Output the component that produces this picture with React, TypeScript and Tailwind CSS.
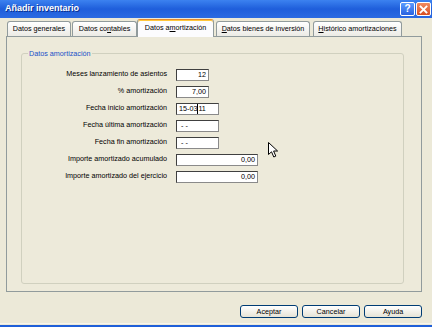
import React from "react";

type Row = {
  label: string;
  width: string;
  value: React.ReactNode;
  align: string;
};

const rows: Row[] = [
  { label: "Meses lanzamiento de asientos", width: "w-[33px]", value: "12", align: "justify-end pr-[2px]" },
  { label: "% amortización", width: "w-[33px]", value: "7,00", align: "justify-end pr-[2px]" },
  {
    label: "Fecha inicio amortización",
    width: "w-[43px]",
    value: (
      <>
        15-03
        <span className="inline-block w-px h-[10px] bg-black" />
        11
      </>
    ),
    align: "justify-start pl-[2px]",
  },
  { label: "Fecha última amortización", width: "w-[43px]", value: "- -", align: "justify-start pl-[4px]" },
  { label: "Fecha fin amortización", width: "w-[43px]", value: "- -", align: "justify-start pl-[4px]" },
  { label: "Importe amortizado acumulado", width: "w-[82px]", value: "0,00", align: "justify-end pr-[2px]" },
  { label: "Importe amortizado del ejercicio", width: "w-[82px]", value: "0,00", align: "justify-end pr-[2px]" },
];

function Tab({ children, width, selected, className = "" }: { children: React.ReactNode; width: string; selected?: boolean; className?: string }) {
  if (selected) {
    return (
      <div
        className={`${width} ${className} h-[18px] -mb-px relative z-10 flex items-center justify-center border border-b-0 border-[#919B9C] border-t-[#E68B2C] rounded-t-[3px] bg-[#FCFCFE] shadow-[inset_0_1px_0_#FFC73C]`}
      >
        {children}
      </div>
    );
  }
  return (
    <div
      className={`${width} ${className} h-[15px] flex items-center justify-center border border-b-0 border-[#919B9C] rounded-t-[3px] bg-linear-to-b from-white to-[#ECEBE5]`}
    >
      {children}
    </div>
  );
}

function XpButton({ children }: { children: React.ReactNode }) {
  return (
    <button className="w-[58px] h-[13px] flex items-center justify-center border border-[#003C74] rounded-[3px] bg-linear-to-b from-white to-[#E6E3D6] text-black leading-none">
      {children}
    </button>
  );
}

export default function App() {
  return (
    <div className="w-[432px] h-[327px] relative overflow-hidden flex flex-col bg-[#ECE9D8] text-black text-[7.2px] font-['Liberation_Sans',Arial,sans-serif]">
      {/* title bar */}
      <div className="h-[18px] flex items-center justify-between pl-[5px] pr-[1px] bg-linear-to-b from-[#3C82F0] via-[#1F5EDB] to-[#2B6AE2]">
        <span className="text-white font-bold text-[9px] [text-shadow:1px_1px_0_#0A2F8C]">Añadir inventario</span>
        <div className="flex gap-[1px]">
          <div className="w-[15px] h-[14px] rounded-[2px] border border-white bg-linear-to-b from-[#5C9BFF] to-[#2A62E0] flex items-center justify-center text-white font-bold text-[10px] leading-none">
            ?
          </div>
          <div className="w-[15px] h-[14px] rounded-[2px] border border-white bg-linear-to-b from-[#F08A60] to-[#D84E20] flex items-center justify-center">
            <svg width="9" height="9" viewBox="0 0 9 9">
              <path d="M1.5 1.5 L7.5 7.5 M7.5 1.5 L1.5 7.5" stroke="white" strokeWidth="1.8" strokeLinecap="square" />
            </svg>
          </div>
        </div>
      </div>

      {/* body */}
      <div className="flex-1 flex flex-col pl-[6px] pr-[10px]">
        <div className="h-[17px] mt-[1px] flex items-end pl-[1px]">
          <Tab width="w-[64px]">Datos generales</Tab>
          <Tab width="w-[65px]" className="ml-[1px]">
            Datos co<span className="underline">n</span>tables
          </Tab>
          <Tab width="w-[77px]" selected>
            Datos a<span className="underline">m</span>ortización
          </Tab>
          <Tab width="w-[94px]" className="ml-[2px]">
            <span className="underline">D</span>atos bienes de inversión
          </Tab>
          <Tab width="w-[89px]" className="ml-[3px]">
            <span className="underline">H</span>istórico amortizaciones
          </Tab>
        </div>

        <div className="h-[256px] flex flex-col border border-[#919B9C] bg-[#EDEADA] pl-[14px] pr-[17px] pb-[7px]">
          <fieldset className="flex-1 mt-[12px] border border-[#D0D0BF] rounded-[3px]">
            <legend className="ml-[6px] px-[1px] leading-[9px] text-[#2150C8]">Datos amortización</legend>
            <div className="pt-[8px] flex flex-col">
              {rows.map((r) => (
                <div key={r.label} className="h-[17px] flex items-center">
                  <span className="w-[145px] text-right">{r.label}</span>
                  <div
                    className={`${r.width} ${r.align} ml-[9px] h-[12px] flex items-center bg-white border border-[#404040] border-r-[#8A8A8A] border-b-[#8A8A8A] leading-none`}
                  >
                    {r.value}
                  </div>
                </div>
              ))}
            </div>
          </fieldset>
        </div>

        <div className="mt-[13px] flex justify-end gap-[4px] pr-[-1px]">
          <XpButton>Aceptar</XpButton>
          <XpButton>Cancelar</XpButton>
          <XpButton>Ayuda</XpButton>
        </div>
      </div>

      <div className="h-px bg-[#F7F5EC] mb-px" />
      <div className="h-[2px] bg-[#1F5FD8]" />

      {/* mouse pointer */}
      <svg className="absolute left-[268px] top-[142px]" width="11" height="16" viewBox="0 0 11 16">
        <path d="M0.5 0.5 L0.5 12.5 L3.5 9.8 L5.8 15 L7.8 14.1 L5.6 9 L9.6 9 Z" fill="white" stroke="black" strokeWidth="1" strokeLinejoin="round" />
      </svg>
    </div>
  );
}
